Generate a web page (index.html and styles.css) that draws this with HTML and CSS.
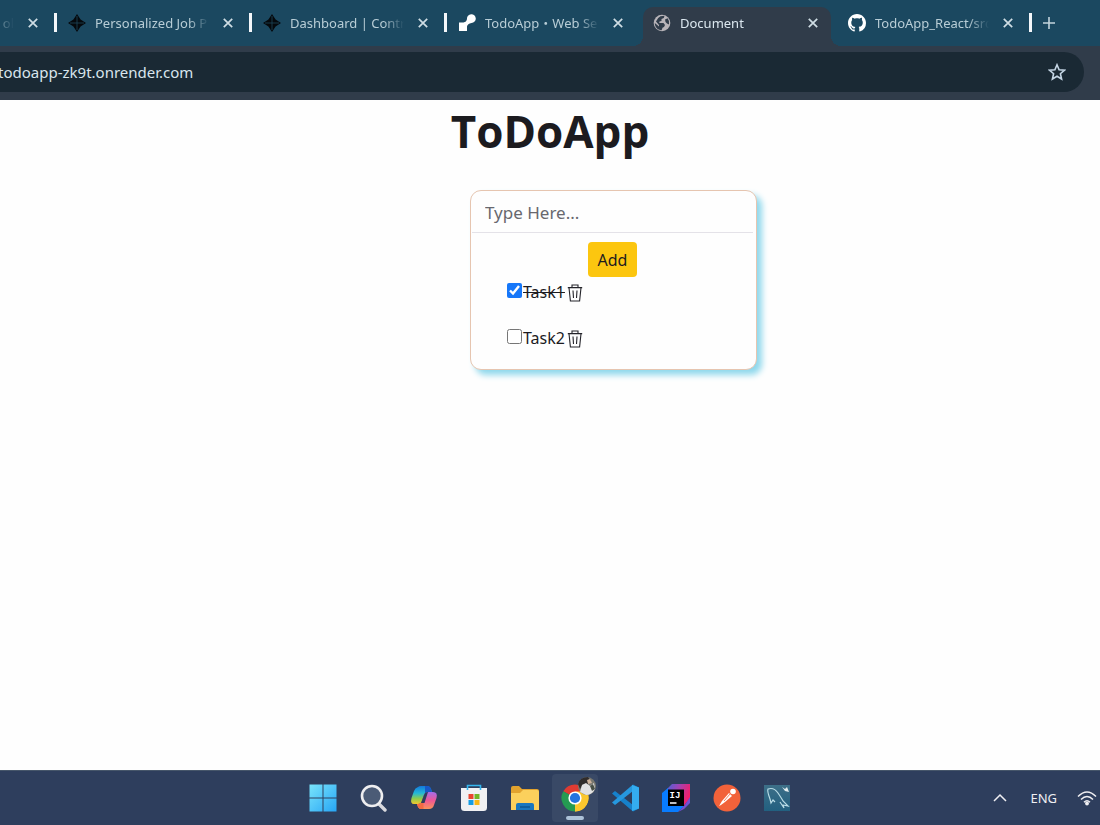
FILE: index.html
```html
<!DOCTYPE html>
<html lang="en">
<head>
  <meta charset="UTF-8">
  <meta name="viewport" content="width=device-width, initial-scale=1.0">
  <title>Document</title>
  <link rel="stylesheet" href="styles.css">
</head>
<body>
  <!-- Shared icons -->
  <svg class="sprite" aria-hidden="true">
    <symbol id="close" viewBox="0 0 12 12">
      <path d="M1.8 1.8 10.2 10.2M10.2 1.8 1.8 10.2" fill="none" stroke="currentColor" stroke-width="1.7"/>
    </symbol>
    <symbol id="spark" viewBox="0 0 18 18">
      <path d="M9 0 12.6 5.4 18 9 12.6 12.6 9 18 5.4 12.6 0 9 5.4 5.4Z" fill="#05090d"/>
      <path d="M9 2V16M2 9H16" stroke="#1d465b" stroke-width=".8"/>
    </symbol>
    <symbol id="trash" viewBox="0 0 16 18">
      <path d="M.8 3.6H15.2M5 3.4V1H11V3.4M2 3.8 3.4 17H12.6L14 3.8M6 6.5 6.5 14M10 6.5 9.5 14" fill="none" stroke="#24242a" stroke-width="1.1"/>
    </symbol>
  </svg>

  <!-- Browser tabs -->
  <header class="browser">
    <nav class="tabs">
      <div class="tab tab-cut">
        <span class="tab-title">ol</span>
        <button class="tab-close" aria-label="Close tab"><svg><use href="#close"/></svg></button>
      </div>
      <div class="tab">
        <svg class="tab-icon"><use href="#spark"/></svg>
        <span class="tab-title">Personalized Job P</span>
        <button class="tab-close" aria-label="Close tab"><svg><use href="#close"/></svg></button>
      </div>
      <div class="tab">
        <svg class="tab-icon"><use href="#spark"/></svg>
        <span class="tab-title">Dashboard | Contr</span>
        <button class="tab-close" aria-label="Close tab"><svg><use href="#close"/></svg></button>
      </div>
      <div class="tab no-line">
        <svg class="tab-icon" viewBox="0 0 18 18">
          <path d="M1 8.5H5.5Q8.5 8 9 5A4.4 4.4 0 1 1 13.5 9Q9.5 9.500 9 12.500V17H1Z" fill="#fff"/>
        </svg>
        <span class="tab-title">TodoApp・Web Se</span>
        <button class="tab-close" aria-label="Close tab"><svg><use href="#close"/></svg></button>
      </div>
      <div class="tab active">
        <svg class="tab-icon" viewBox="0 0 18 18">
          <circle cx="9" cy="9" r="8.3" fill="#b8b4b9"/>
          <path d="M7.400 2.200 11.500 1.800 10.800 4 8.500 5V7L6.500 7.500 6.300 9H10.500L12 11 11 13 9.500 13.700 8.600 16.300C4.500 16 1.800 13 1.800 9L6 12.500V11L3 7.500Q4 4 7.400 2.200Z" fill="#303c4a"/>
          <path d="M12 5.500 14.600 4.200Q16.800 7 16 10.500L14 9.500 12.500 8Z" fill="#303c4a"/>
        </svg>
        <span class="tab-title">Document</span>
        <button class="tab-close" aria-label="Close tab"><svg><use href="#close"/></svg></button>
      </div>
      <div class="tab">
        <svg class="tab-icon" viewBox="0 0 16 16">
          <path fill="#fff" d="M8 0C3.580 0 0 3.580 0 8c0 3.540 2.290 6.530 5.470 7.590.4.070.550-.170.550-.380 0-.190-.010-.820-.010-1.490-2.010.370-2.530-.490-2.690-.940-.090-.230-.480-.940-.820-1.130-.280-.150-.680-.520-.010-.530.630-.010 1.080.580 1.230.820.720 1.210 1.870.870 2.330.660.070-.520.280-.870.510-1.070-1.780-.2-3.640-.890-3.640-3.950 0-.870.310-1.590.820-2.150-.080-.2-.360-1.020.080-2.120 0 0 .670-.210 2.200.820.640-.180 1.320-.270 2-.270s1.360.090 2 .270c1.530-1.040 2.200-.820 2.200-.820.440 1.100.160 1.920.080 2.120.510.560.820 1.270.820 2.150 0 3.070-1.870 3.750-3.650 3.950.290.250.540.730.540 1.480 0 1.070-.010 1.930-.010 2.200 0 .210.150.460.550.380A8.010 8.010 0 0 0 16 8c0-4.420-3.580-8-8-8"/>
        </svg>
        <span class="tab-title">TodoApp_React/src</span>
        <button class="tab-close" aria-label="Close tab"><svg><use href="#close"/></svg></button>
      </div>
      <button class="new-tab" aria-label="New tab">
        <svg viewBox="0 0 14 14"><path d="M7 1V13M1 7H13" stroke="currentColor" stroke-width="1.6"/></svg>
      </button>
    </nav>

    <div class="toolbar">
      <div class="address">
        <span class="url">todoapp-zk9t.onrender.com</span>
        <button class="star" aria-label="Bookmark this tab">
          <svg viewBox="0 0 18 18"><path d="M9 1.800 11.100 6.700 16.500 7.200 12.400 10.700 13.600 16 9 13.200 4.400 16 5.600 10.700 1.500 7.200 6.900 6.700Z" fill="none" stroke="#c4d5e4" stroke-width="1.600"/></svg>
        </button>
      </div>
    </div>
  </header>

  <!-- Todo app -->
  <main>
    <h1>ToDoApp</h1>
    <form class="card" onsubmit="return false">
      <input type="text" class="task-input" placeholder="Type Here..." aria-label="New task">
      <button class="add">Add</button>
      <ul class="tasks">
        <li>
          <input type="checkbox" id="task1" checked>
          <label for="task1">Task1</label>
          <button type="button" class="delete" aria-label="Delete Task1"><svg><use href="#trash"/></svg></button>
        </li>
        <li>
          <input type="checkbox" id="task2">
          <label for="task2">Task2</label>
          <button type="button" class="delete" aria-label="Delete Task2"><svg><use href="#trash"/></svg></button>
        </li>
      </ul>
    </form>
  </main>

  <!-- Taskbar -->
  <footer class="taskbar">
    <div class="apps">
      <button aria-label="Start">
        <svg viewBox="0 0 28 28">
          <defs><linearGradient id="win" x1="0" y1="0" x2="28" y2="28" gradientUnits="userSpaceOnUse"><stop stop-color="#7be5fb"/><stop offset="1" stop-color="#25a4f5"/></linearGradient></defs>
          <path d="M.5.5H13.500V13.500H.5ZM14.500.5H27.5V13.500H14.500ZM.5 14.500H13.500V27.5H.5ZM14.500 14.500H27.5V27.5H14.500Z" fill="url(#win)"/>
        </svg>
      </button>
      <button aria-label="Search">
        <svg viewBox="0 0 28 28">
          <path d="M19.500 19.500 26 26" stroke="#d9d9de" stroke-width="3.400" stroke-linecap="round"/>
          <circle cx="13" cy="12" r="10" fill="#4b5b76" stroke="#eeeef0" stroke-width="2.600"/>
        </svg>
      </button>
      <button aria-label="Copilot">
        <svg viewBox="0 0 28 28">
          <defs>
            <linearGradient id="cpA" x1="0" y1="0" x2="0" y2="1"><stop stop-color="#1479dc"/><stop offset=".4" stop-color="#22b8d8"/><stop offset=".7" stop-color="#8dcc4d"/><stop offset="1" stop-color="#f2c82e"/></linearGradient>
            <linearGradient id="cpB" x1="0" y1="0" x2="0" y2="1"><stop stop-color="#a36de9"/><stop offset=".5" stop-color="#ee5795"/><stop offset="1" stop-color="#fa9358"/></linearGradient>
          </defs>
          <path d="M8 3Q9 2 11 2H17Q20 2 21 5L22 8H18Q15 8 14 11L12 17Q11 20 8 20H4Q0 20 1.500 14L4 7Q5 4 8 3Z" fill="url(#cpA)"/>
          <path d="M15 2H17Q20 2 21 5L22 8H18Q16 8 15 10Z" fill="#1758c7"/>
          <path d="M19 8H23Q28 8 26.500 14L24 21Q23 25 19 25H11Q8 25 7 20H8Q11 20 12 17L14 11Q15 8 19 8Z" fill="url(#cpB)"/>
          <path d="M7 20H8Q11 20 12 17L13.500 13V25H11Q8 25 7 20Z" fill="#f26b43"/>
          <path d="M14 11Q15 8 18 8L14.500 19H11Z" fill="#2e3e5d"/>
        </svg>
      </button>
      <button aria-label="Store">
        <svg viewBox="0 0 28 28">
          <path d="M1 4H27V23.500Q27 27 23.500 27H4.500Q1 27 1 23.500Z" fill="#f1f1f3"/>
          <path d="M7.500 6V1.500H20.500V6" fill="none" stroke="#35b6ef" stroke-width="1.600"/>
          <path d="M8.500 10H13.500V15H8.500Z" fill="#e9452f"/><path d="M14.500 10H19.500V15H14.500Z" fill="#72b625"/>
          <path d="M8.500 16H13.500V21H8.500Z" fill="#159ce4"/><path d="M14.500 16H19.500V21H14.500Z" fill="#f9b716"/>
        </svg>
      </button>
      <button aria-label="File Explorer">
        <svg viewBox="0 0 28 28">
          <path d="M0 4Q0 2 2 2H8L11 5H26Q28 5 28 7V12H0Z" fill="#e2a32e"/>
          <path d="M0 9H9L12 6H26Q28 6 28 8V26H0Z" fill="#fbd05c"/>
          <path d="M5 26V21Q5 19 7 19H21Q23 19 23 21V26Z" fill="#1776bf"/>
          <path d="M9 23H19" stroke="#0a5795" stroke-width="1.500"/>
        </svg>
      </button>
      <button class="running" aria-label="Chrome">
        <svg viewBox="0 0 28 28">
          <path d="M14 14 2.300 7.250A13.500 13.500 0 0 1 25.700 7.250Z" fill="#df3b32"/>
          <path d="M14 14 25.700 7.250A13.500 13.500 0 0 1 14 27.500Z" fill="#fbc72e"/>
          <path d="M14 14 14 27.500A13.500 13.500 0 0 1 2.300 7.250Z" fill="#259b52"/>
          <path d="M14 7.500H25.800A13.500 13.500 0 0 1 14 27.500L19.600 17.200Z" fill="#fbc72e"/>
          <circle cx="14" cy="14" r="6.600" fill="#fff"/><circle cx="14" cy="14" r="5.100" fill="#2474df"/>
        </svg>
        <svg class="avatar" viewBox="0 0 18 18">
          <circle cx="9" cy="9" r="9" fill="#77776f"/>
          <path d="M0 7Q2 0 10 0L13 4 8 9 5 7 2 12Z" fill="#302c2b"/>
          <path d="M4 8 8 6 12 9 16 6 17 12Q14 18 8 18L2 15Z" fill="#e2e2e3"/>
          <path d="M9 3 12 2 14 6 10 7Z" fill="#ccb29b"/>
          <path d="M12 9 15 7 17 12 14 14Z" fill="#485046"/>
        </svg>
      </button>
      <button aria-label="VS Code">
        <svg viewBox="0 0 28 28">
          <path d="M21 .500 27 3.500V24.500L21 27.500 0 9.500 3 7 21 21Z" fill="#1681cb"/>
          <path d="M21 .500V7L3 21 0 18.500Z" fill="#2698df"/>
          <path d="M20 1 27 3.500V24.500L20 27Z" fill="#34adf0"/>
        </svg>
      </button>
      <button aria-label="IntelliJ IDEA">
        <svg viewBox="0 0 28 28">
          <defs><linearGradient id="ijA" x1="3" y1="1" x2="28" y2="10" gradientUnits="userSpaceOnUse"><stop stop-color="#3e67de"/><stop offset=".5" stop-color="#a043b5"/><stop offset="1" stop-color="#f51d67"/></linearGradient></defs>
          <path d="M10 0H28V14L20 24H5V5Z" fill="url(#ijA)"/>
          <path d="M0 9 6 4V22H22L16 28H0Z" fill="#087cff"/>
          <path d="M22 22 28 13V19L22 25 16 28Z" fill="#724dd2"/>
          <path d="M6 5.500H22V22H6Z" fill="#000"/>
          <text x="7.500" y="14" class="ij">IJ</text>
          <path d="M8 19H14.500" stroke="#fff" stroke-width="1.500"/>
        </svg>
      </button>
      <button aria-label="Postman">
        <svg viewBox="0 0 28 28">
          <circle cx="14" cy="14" r="13.500" fill="#f2623a"/>
          <path d="M6 22 9 17 16 9 19 12 12 18 8 21Z" fill="#fff"/>
          <circle cx="20" cy="7.500" r="2.800" fill="#fff"/>
          <path d="M11 17 17 10" stroke="#f2623a" stroke-width=".8"/>
        </svg>
      </button>
      <button aria-label="MySQL Workbench">
        <svg viewBox="0 0 28 28">
          <defs><linearGradient id="sql" x1="0" y1="0" x2="0" y2="1"><stop stop-color="#3d6f88"/><stop offset="1" stop-color="#226080"/></linearGradient></defs>
          <path d="M1 1H27V27H1Z" fill="url(#sql)"/>
          <path d="M7 15Q4 7 5 5 11 3 15 9T20 17L25 22 20 21 21 24 17 18M7 15 8 19 10 16 12 18" fill="none" stroke="#b9dce6" stroke-width="1.200"/>
          <path d="M19 3 22 5 24 3 26 8 22 7Z" fill="#e4edf0"/>
        </svg>
      </button>
    </div>

    <div class="tray">
      <svg class="chevron" viewBox="0 0 14 14"><path d="M1 10 7 4 13 10" fill="none" stroke="#f0eff3" stroke-width="1.500"/></svg>
      <span>ENG</span>
      <svg class="wifi" viewBox="0 0 20 16">
        <path d="M1 6.500Q10-2.500 19 6.500M4 9.500Q10 3.500 16 9.500M7 12.300Q10 9.300 13 12.300" fill="none" stroke="#f0eff3" stroke-width="1.500"/>
        <circle cx="10" cy="13.500" r="1.900" fill="#f0eff3"/>
      </svg>
    </div>
  </footer>
</body>
</html>
```
FILE: styles.css
```css
* {
  box-sizing: border-box;
}

body {
  display: flex;
  flex-direction: column;
  min-height: 100vh;
  margin: 0;
  overflow-x: hidden;
  background-color: #fefefe;
  color: #1c1b1f;
  font-family: "Noto Sans", "Noto Sans CJK JP", sans-serif;
  font-size: 16px;
}

button {
  padding: 0;
  border: none;
  background: none;
  color: inherit;
  font-family: inherit;
  cursor: pointer;
}

svg {
  display: block;
}

.sprite {
  display: none;
}

/* Browser */
.browser {
  overflow: hidden;
  background-color: #1b4860;
}

.tabs {
  display: flex;
  height: 46px;
  margin-left: -138px;  /* the first tab is scrolled out */
}

.tab {
  position: relative;
  display: flex;
  flex: none;
  align-items: center;
  width: 195px;
  padding: 0 18px 0 11px;
  color: #b8cdd6;
  font-size: 13px;
}

.tab::after {
  content: "";
  position: absolute;
  right: 0;
  top: 13px;
  width: 3px;
  height: 19px;
  background-color: #f4f7fa;
}

.tab.no-line::after {
  display: none;
}

.tab-icon {
  flex: none;
  width: 18px;
  height: 18px;
  margin-right: 9px;
}

.tab-title {
  flex: 1;
  margin-right: 13px;
  overflow: hidden;
  line-height: 24px;
  white-space: nowrap;
  -webkit-mask-image: linear-gradient(to right, #000 82%, transparent);
  mask-image: linear-gradient(to right, #000 82%, transparent);
}

.tab-cut .tab-title {
  text-align: right;
}

.tab-close {
  flex: none;
  color: #cfdde4;
}

.tab-close svg {
  width: 12px;
  height: 12px;
}

.tab.active {
  color: #dbe7ef;
}

.tab.active .tab-icon,
.tab.active .tab-title,
.tab.active .tab-close {
  z-index: 1;
}

.tab.active::before,
.tab.active::after {
  content: "";
  position: absolute;
  background-color: #303c4a;
}

.tab.active::before {
  top: 7px;
  right: 6px;
  bottom: 0;
  left: 1px;
  border-radius: 10px 10px 0 0;
}

/* curved feet of the active tab */
.tab.active::after {
  top: auto;
  right: -4px;
  bottom: 0;
  left: -9px;
  width: auto;
  height: 10px;
  -webkit-mask-image: radial-gradient(circle at 0 0, transparent 10px, #000 10px), radial-gradient(circle at 100% 0, transparent 10px, #000 10px);
  mask-image: radial-gradient(circle at 0 0, transparent 10px, #000 10px), radial-gradient(circle at 100% 0, transparent 10px, #000 10px);
  mask-size: 50% 100%;
  mask-position: left, right;
  mask-repeat: no-repeat;
}

.new-tab {
  flex: none;
  margin-left: 10px;
  color: #c3d4dc;
}

.new-tab svg {
  width: 14px;
  height: 14px;
}

.toolbar {
  padding: 6px 16px 8px 0;
  background-color: #303c4a;
}

.address {
  display: flex;
  align-items: center;
  justify-content: space-between;
  height: 40px;
  padding-right: 18px;
  border-radius: 0 20px 20px 0;
  background-color: #1a2934;
  color: #d9e5ed;
}

.url {
  margin-left: -2px;
  font-size: 15px;
}

.star svg {
  width: 18px;
  height: 18px;
}

/* Todo app */
main {
  flex: 1;
}

h1 {
  margin: 0 0 28px;
  font-family: "Open Sans", sans-serif;
  font-size: 44px;
  line-height: 62px;
  text-align: center;
}

.card {
  width: 287px;
  margin-left: calc(50% - 80px);
  padding: 2px 3px 8px 1px;
  border: 1px solid #e6c5b0;
  border-radius: 11px;
  background-color: #fefefe;
  box-shadow: 5px 5px 6px #8fd8ec;
}

.task-input {
  display: block;
  width: 100%;
  height: 40px;
  padding: 0 13px;
  border: none;
  border-bottom: 1px solid #e4e2e8;
  outline: none;
  background: none;
  font-family: inherit;
  font-size: 17px;
}

.task-input::placeholder {
  color: #68686e;
}

.add {
  display: block;
  width: 49px;
  height: 35px;
  margin: 9px auto 0;
  border-radius: 4px;
  background-color: #fcc60f;
  font-size: 16px;
}

.tasks {
  margin: 0;
  padding: 0 0 0 35px;
  list-style: none;
}

.tasks li {
  display: flex;
  align-items: flex-start;
  height: 46px;
  padding-top: 3px;
  line-height: 24px;
}

.tasks li:last-child {
  height: 38px;
}

.tasks input {
  width: 15px;
  height: 15px;
  margin: 3px 1px 0 0;
  accent-color: #1677f9;
}

.tasks input:checked + label {
  text-decoration: line-through;
}

.delete {
  margin: 4px 0 0 2px;
}

.delete svg {
  width: 16px;
  height: 18px;
}

/* Taskbar */
.taskbar {
  display: grid;
  grid-template-columns: 1fr 501px 1fr;
  align-items: center;
  height: 55px;
  border-top: 1px solid #46566a;
  background-color: #2e3e5d;
}

.apps {
  display: flex;
  grid-column: 2;
  justify-content: space-between;
}

.apps button {
  position: relative;
  display: flex;
  align-items: center;
  justify-content: center;
  width: 46px;
  height: 48px;
  border-radius: 4px;
}

.apps svg {
  width: 28px;
  height: 28px;
}

.apps .running {
  background-color: #394966;
}

.running::after {
  content: "";
  position: absolute;
  bottom: 2px;
  width: 18px;
  height: 4px;
  border-radius: 2px;
  background-color: #adc2d8;
}

.apps .avatar {
  position: absolute;
  top: 3px;
  right: 2px;
  width: 18px;
  height: 18px;
}

.ij {
  fill: #fff;
  font-family: "Liberation Mono", monospace;
  font-size: 9px;
  font-weight: bold;
}

.tray {
  display: flex;
  align-items: center;
  justify-content: flex-end;
  padding-right: 3px;
  color: #f0eff3;
  font-size: 13px;
}

.chevron {
  width: 14px;
  height: 14px;
  margin-right: 23px;
}

.wifi {
  width: 20px;
  height: 16px;
  margin-left: 20px;
}
```
